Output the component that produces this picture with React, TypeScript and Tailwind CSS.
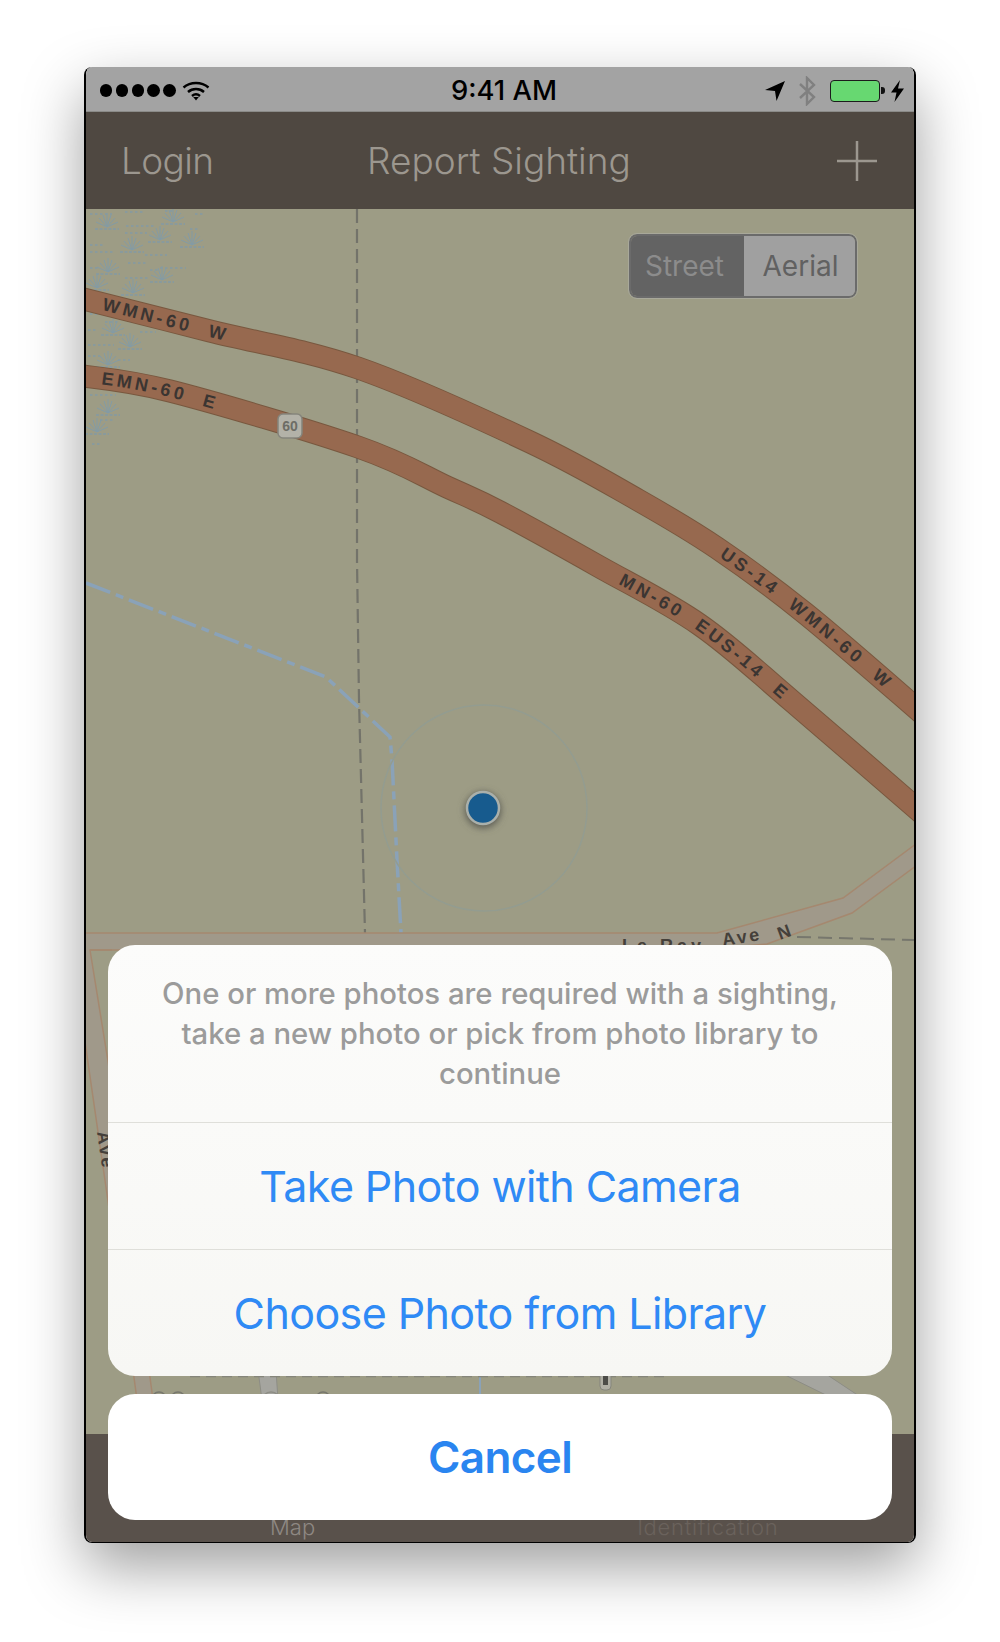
/* Report Sighting screen with photo action sheet, inside a mac window frame */

const marshFans = [
  [107, 227], [173, 222], [132, 250], [160, 240], [192, 245], [108, 272], [162, 280], [97, 288],
  [133, 293], [113, 333], [130, 347], [108, 413], [97, 432], [108, 365],
];

const marshDashes = [
  [90, 214, 22], [125, 212, 20], [165, 211, 10], [195, 214, 8], [90, 245, 14], [126, 226, 30], [190, 229, 8],
  [125, 233, 22], [145, 255, 22], [90, 252, 24], [128, 263, 20], [160, 268, 26], [90, 268, 8], [125, 278, 24],
  [150, 270, 10], [90, 314, 8], [105, 322, 14], [130, 322, 20], [88, 330, 8], [88, 345, 26], [140, 332, 16],
  [88, 356, 12], [118, 360, 12], [90, 395, 26], [100, 420, 14], [92, 444, 8],
];

function Marsh() {
  return (
    <g stroke="#7f9bab" fill="none" opacity="0.85">
      {marshFans.map(([x, y]) => (
        <path
          key={`${x}-${y}`}
          strokeWidth="1"
          d={`M${x} ${y}v-14M${x} ${y}l-4-12M${x} ${y}l4-12M${x} ${y}l-8-9M${x} ${y}l8-9M${x} ${y}l-11-5M${x} ${y}l11-5`}
        />
      ))}
      {marshFans.map(([x, y]) => (
        <line key={`b${x}-${y}`} x1={x - 12} y1={y + 2} x2={x + 12} y2={y + 2} strokeWidth="1.4" strokeDasharray="3 1.5" />
      ))}
      {marshDashes.map(([x, y, w]) => (
        <line key={`${x}:${y}`} x1={x} y1={y} x2={x + w} y2={y} strokeWidth="1.3" strokeDasharray="2.5 2.5" />
      ))}
    </g>
  );
}

// catmull-rom through the points, so the highways bend softly
function smooth(pts: number[][]) {
  let d = `M${pts[0][0]} ${pts[0][1]}`;
  for (let i = 0; i < pts.length - 1; i++) {
    const p0 = pts[Math.max(i - 1, 0)];
    const p1 = pts[i];
    const p2 = pts[i + 1];
    const p3 = pts[Math.min(i + 2, pts.length - 1)];
    d += ` C${p1[0] + (p2[0] - p0[0]) / 6} ${p1[1] + (p2[1] - p0[1]) / 6} ${p2[0] - (p3[0] - p1[0]) / 6} ${p2[1] - (p3[1] - p1[1]) / 6} ${p2[0]} ${p2[1]}`;
  }
  return d;
}

const roadUpper = smooth([[76, 297], [210, 331], [358, 368], [530, 442], [638, 500], [717, 548], [806, 614], [924, 715]]);
const roadLower = smooth([[76, 375], [170, 391], [358, 447], [447, 487], [500, 512], [598, 566], [700, 625], [793, 702], [924, 815]]);

function MapDrawing() {
  return (
    <svg viewBox="86 209 828 1225" className="block w-full h-full">
      <defs>
        <path id="road-upper" d={roadUpper} />
        <path id="road-lower" d={roadLower} />
        <filter id="pin-shadow" x="-60%" y="-60%" width="220%" height="220%">
          <feGaussianBlur stdDeviation="3.5" />
        </filter>
      </defs>
      <rect x="86" y="209" width="828" height="1225" fill="#9d9c85" />
      <Marsh />

      {/* dashed boundary and creek */}
      <path d="M357 209 L357 560 L359 700 L365 933" stroke="#73736a" strokeWidth="2.2" strokeDasharray="14 6" fill="none" />
      <path d="M797 937 L914 940" stroke="#77776d" strokeWidth="2" strokeDasharray="14 7" fill="none" />
      <path d="M86 583 L326 677 L390 737 L392 760 L397 860 L401 933" stroke="#8aa2b8" strokeWidth="3.5" strokeDasharray="26 6 8 6" fill="none" />

      {/* highways */}
      <path d={roadUpper} stroke="#78583f" strokeWidth="23" fill="none" />
      <path d={roadUpper} stroke="#97694f" strokeWidth="21" fill="none" />
      <path d={roadLower} stroke="#78583f" strokeWidth="23" fill="none" />
      <path d={roadLower} stroke="#97694f" strokeWidth="21" fill="none" />
      <g fill="#3b3532" fontFamily="Liberation Sans, sans-serif" fontWeight="700" fontSize="18" letterSpacing="3.5">
        <text dy="6"><textPath href="#road-upper" startOffset="28">{"WMN-60\u00A0\u00A0W"}</textPath></text>
        <text dy="6"><textPath href="#road-upper" startOffset="700">{"US-14\u00A0\u00A0WMN-60\u00A0\u00A0W"}</textPath></text>
        <text dy="6"><textPath href="#road-lower" startOffset="26">{"EMN-60\u00A0\u00A0E"}</textPath></text>
        <text dy="6"><textPath href="#road-lower" startOffset="586">{"MN-60\u00A0\u00A0EUS-14\u00A0\u00A0E"}</textPath></text>
      </g>
      <rect x="278" y="414" width="24" height="24" rx="5" fill="#b3b2a8" stroke="#85857c" strokeWidth="1.5" />
      <text x="290" y="431" textAnchor="middle" fontFamily="Liberation Sans, sans-serif" fontWeight="700" fontSize="14" fill="#6d6d66">60</text>

      {/* Le Ray Ave band */}
      <path d="M76 933 L500 933 L717 933 L843 898 L924 838 L924 860 L852 913 L767 944 L700 950 L90 950 L76 950 Z" fill="#a0998a" stroke="#a5886f" strokeWidth="1.5" />
      <path d="M84 945 L90 950 L107 1057 L112 1080 L112 1225 L107 1197 L84 1035 Z" fill="#a0998a" />
      <path d="M90 950 L112 1086 M84 1035 L110 1215" stroke="#a5886f" strokeWidth="1.5" fill="none" />
      <path d="M90 950 H112" stroke="#a5886f" strokeWidth="1.5" fill="none" />
      <g fill="#45403a" fontFamily="Liberation Sans, sans-serif" fontWeight="700" fontSize="18">
        <text x="622" y="952" letterSpacing="4">Le Ray</text>
        <text x="723" y="946" letterSpacing="2.5" transform="rotate(-9 723 946)">Ave</text>
        <text x="780" y="940" transform="rotate(-20 780 940)">N</text>
        <text x="97" y="1132" letterSpacing="2" transform="rotate(82 97 1132)">Ave</text>
      </g>

      {/* bits of the map seen between the two sheets */}
      <path d="M133 1370 L149 1370 L153 1400 L137 1400 Z" fill="#a0998a" />
      <path d="M133 1370 L137 1400 M149 1370 L153 1400" stroke="#a5886f" strokeWidth="1.5" fill="none" />
      <path d="M258 1370 L276 1370 L278 1400 L262 1400 Z" fill="#a5a59f" stroke="#8d8d85" strokeWidth="1" />
      <path d="M775 1370 L820 1370 L865 1400 L836 1400 Z" fill="#a5a59f" stroke="#8d8d85" strokeWidth="1" />
      <path d="M480 1370 V1400" stroke="#8aa2b8" strokeWidth="2" />
      <circle cx="159" cy="1399" r="7" fill="none" stroke="#77776d" strokeWidth="1.5" />
      <circle cx="178" cy="1399" r="7" fill="none" stroke="#77776d" strokeWidth="1.5" />
      <circle cx="271" cy="1401" r="9" fill="#a5a59f" stroke="#8d8d85" strokeWidth="1.5" />
      <circle cx="323" cy="1399" r="7" fill="none" stroke="#77776d" strokeWidth="1.5" />
      <path d="M190 1376.5 H670" stroke="#85857a" strokeWidth="1.5" strokeDasharray="10 6" />
      <rect x="600" y="1368" width="11" height="22" rx="4" fill="#b0afa5" stroke="#85857c" />
      <rect x="603" y="1372" width="5" height="13" fill="#4c4c48" />

      {/* location */}
      <circle cx="484" cy="808" r="103" fill="none" stroke="#939c90" strokeWidth="1.5" />
      <circle cx="483" cy="810" r="18" fill="#5c5c52" filter="url(#pin-shadow)" />
      <circle cx="483" cy="808" r="16" fill="#175b8e" stroke="#aab0ab" strokeWidth="2.5" />
    </svg>
  );
}

function StatusBar() {
  return (
    <div className="relative flex h-[45px] shrink-0 items-center justify-between border-b border-[#8b8b88] bg-[#a3a3a3] pl-[14px] pr-[10px] pt-[3px]">
      <div className="flex items-center gap-[3.4px]">
        {[0, 1, 2, 3, 4].map((i) => (
          <span key={i} className="h-[12.4px] w-[12.4px] rounded-full bg-black" />
        ))}
        <svg width="28" height="20" viewBox="0 0 28 20" className="ml-[3px]" fill="none" stroke="#000" strokeWidth="2.4">
          <path d="M1.5 6.5C8.5 .5 19.5 .5 26.5 6.5" />
          <path d="M6 11C10.5 7 17.5 7 22 11" />
          <path d="M10 15C12.5 12.8 15.5 12.8 18 15" />
          <path d="M11.2 16H16.8L14 19.6Z" fill="#000" stroke="none" />
        </svg>
      </div>
      <span className="absolute left-[365px] top-[10px] font-[family-name:Inter,sans-serif] text-[27.4px] font-medium leading-none text-black">9:41 AM</span>
      <div className="flex items-center">
        <svg width="20" height="20" viewBox="0 0 20 20">
          <path d="M20 0L11.5 20L10 10L0 9Z" fill="#000" />
        </svg>
        <svg width="18" height="30" viewBox="0 0 18 30" className="ml-[13px]" fill="none" stroke="#808080" strokeWidth="2.4">
          <path d="M2 8L16 21L9 28V2L16 9L2 22" />
        </svg>
        <div className="ml-[14px] h-[22px] w-[50px] rounded-[4px] border-[1.5px] border-[#1c1c1c] bg-[#67d871]" />
        <span className="ml-px h-[7px] w-[4px] rounded-r-[3px] bg-[#111]" />
        <svg width="13" height="22" viewBox="0 0 13 22" className="ml-[6px]">
          <path d="M9 0L0 12.5H5.5L3.5 22L13 8.5H7Z" fill="#000" />
        </svg>
      </div>
    </div>
  );
}

function NavBar() {
  return (
    <div className="relative flex h-[97px] shrink-0 items-center justify-between bg-[#4f4841] pl-[35px] pr-[37px] font-[family-name:Inter,sans-serif] font-light text-[#9c978f]">
      <span className="text-[37px] leading-none tracking-[-0.6px]">Login</span>
      <span className="absolute left-[281px] text-[37px] leading-none">Report Sighting</span>
      <svg width="40" height="40" viewBox="0 0 40 40" stroke="#9c978f" strokeWidth="2.5">
        <path d="M20 0V40M0 20H40" />
      </svg>
    </div>
  );
}

function Segmented() {
  return (
    <div className="absolute left-[543px] top-[25px] flex h-[64px] w-[228px] overflow-hidden rounded-[8px] border-2 border-[#6b6b6b] font-[family-name:Inter,sans-serif] text-[28px] outline-1 outline-[#a8a89a]">
      <div className="flex w-[113px] items-center justify-center bg-[#636363] pr-[6px] text-[#8c8c8c]">Street</div>
      <div className="flex flex-1 items-center justify-center bg-[#a0a0a0] pl-[2px] text-[#616161]">Aerial</div>
    </div>
  );
}

function ActionSheet() {
  return (
    <div className="absolute inset-x-[22px] bottom-[22px] flex flex-col gap-[18px] font-[family-name:Inter,sans-serif]">
      <div className="overflow-hidden rounded-[27px] bg-linear-to-b from-[#fcfcfb] to-[#f7f7f4]">
        <div className="flex h-[177px] items-center justify-center px-[20px] text-center text-[29.3px] font-medium leading-[40px] text-[#9b9b9b]">
          <p>
            One or more photos are required with a sighting,
            <br />
            take a new photo or pick from photo library to
            <br />
            continue
          </p>
        </div>
        <button className="flex h-[127px] w-full items-center justify-center border-t border-[#dfdfda] text-[43px] tracking-[-0.6px] text-[#2f8af5]">
          Take Photo with Camera
        </button>
        <button className="flex h-[127px] w-full items-center justify-center border-t border-[#dfdfda] text-[43px] tracking-[-0.6px] text-[#2f8af5]">
          Choose Photo from Library
        </button>
      </div>
      <button className="flex h-[126px] items-center justify-center rounded-[27px] bg-white text-[44px] font-semibold tracking-[-0.6px] text-[#2a85f0]">
        Cancel
      </button>
    </div>
  );
}

export default function App() {
  return (
    <div className="h-[1642px] w-[1000px] overflow-hidden bg-white pl-[84px] pt-[67px]">
      <div className="relative flex h-[1476px] w-[832px] flex-col overflow-hidden rounded-[8px] border-x-2 border-b border-black shadow-[0_24px_60px_0_rgba(0,0,0,0.38)]">
        <StatusBar />
        <NavBar />
        <div className="relative min-h-0 flex-1">
          <MapDrawing />
          <Segmented />
        </div>
        <div className="flex h-[108px] shrink-0 items-end bg-[#59514b] font-[family-name:Inter,sans-serif] text-[22px] font-light leading-[30px]">
          <span className="ml-[184px] text-[#8e8883]">Map</span>
          <span className="ml-[322px] tracking-[0.7px] text-[#6a625c]">Identification</span>
        </div>
        <ActionSheet />
      </div>
    </div>
  );
}
